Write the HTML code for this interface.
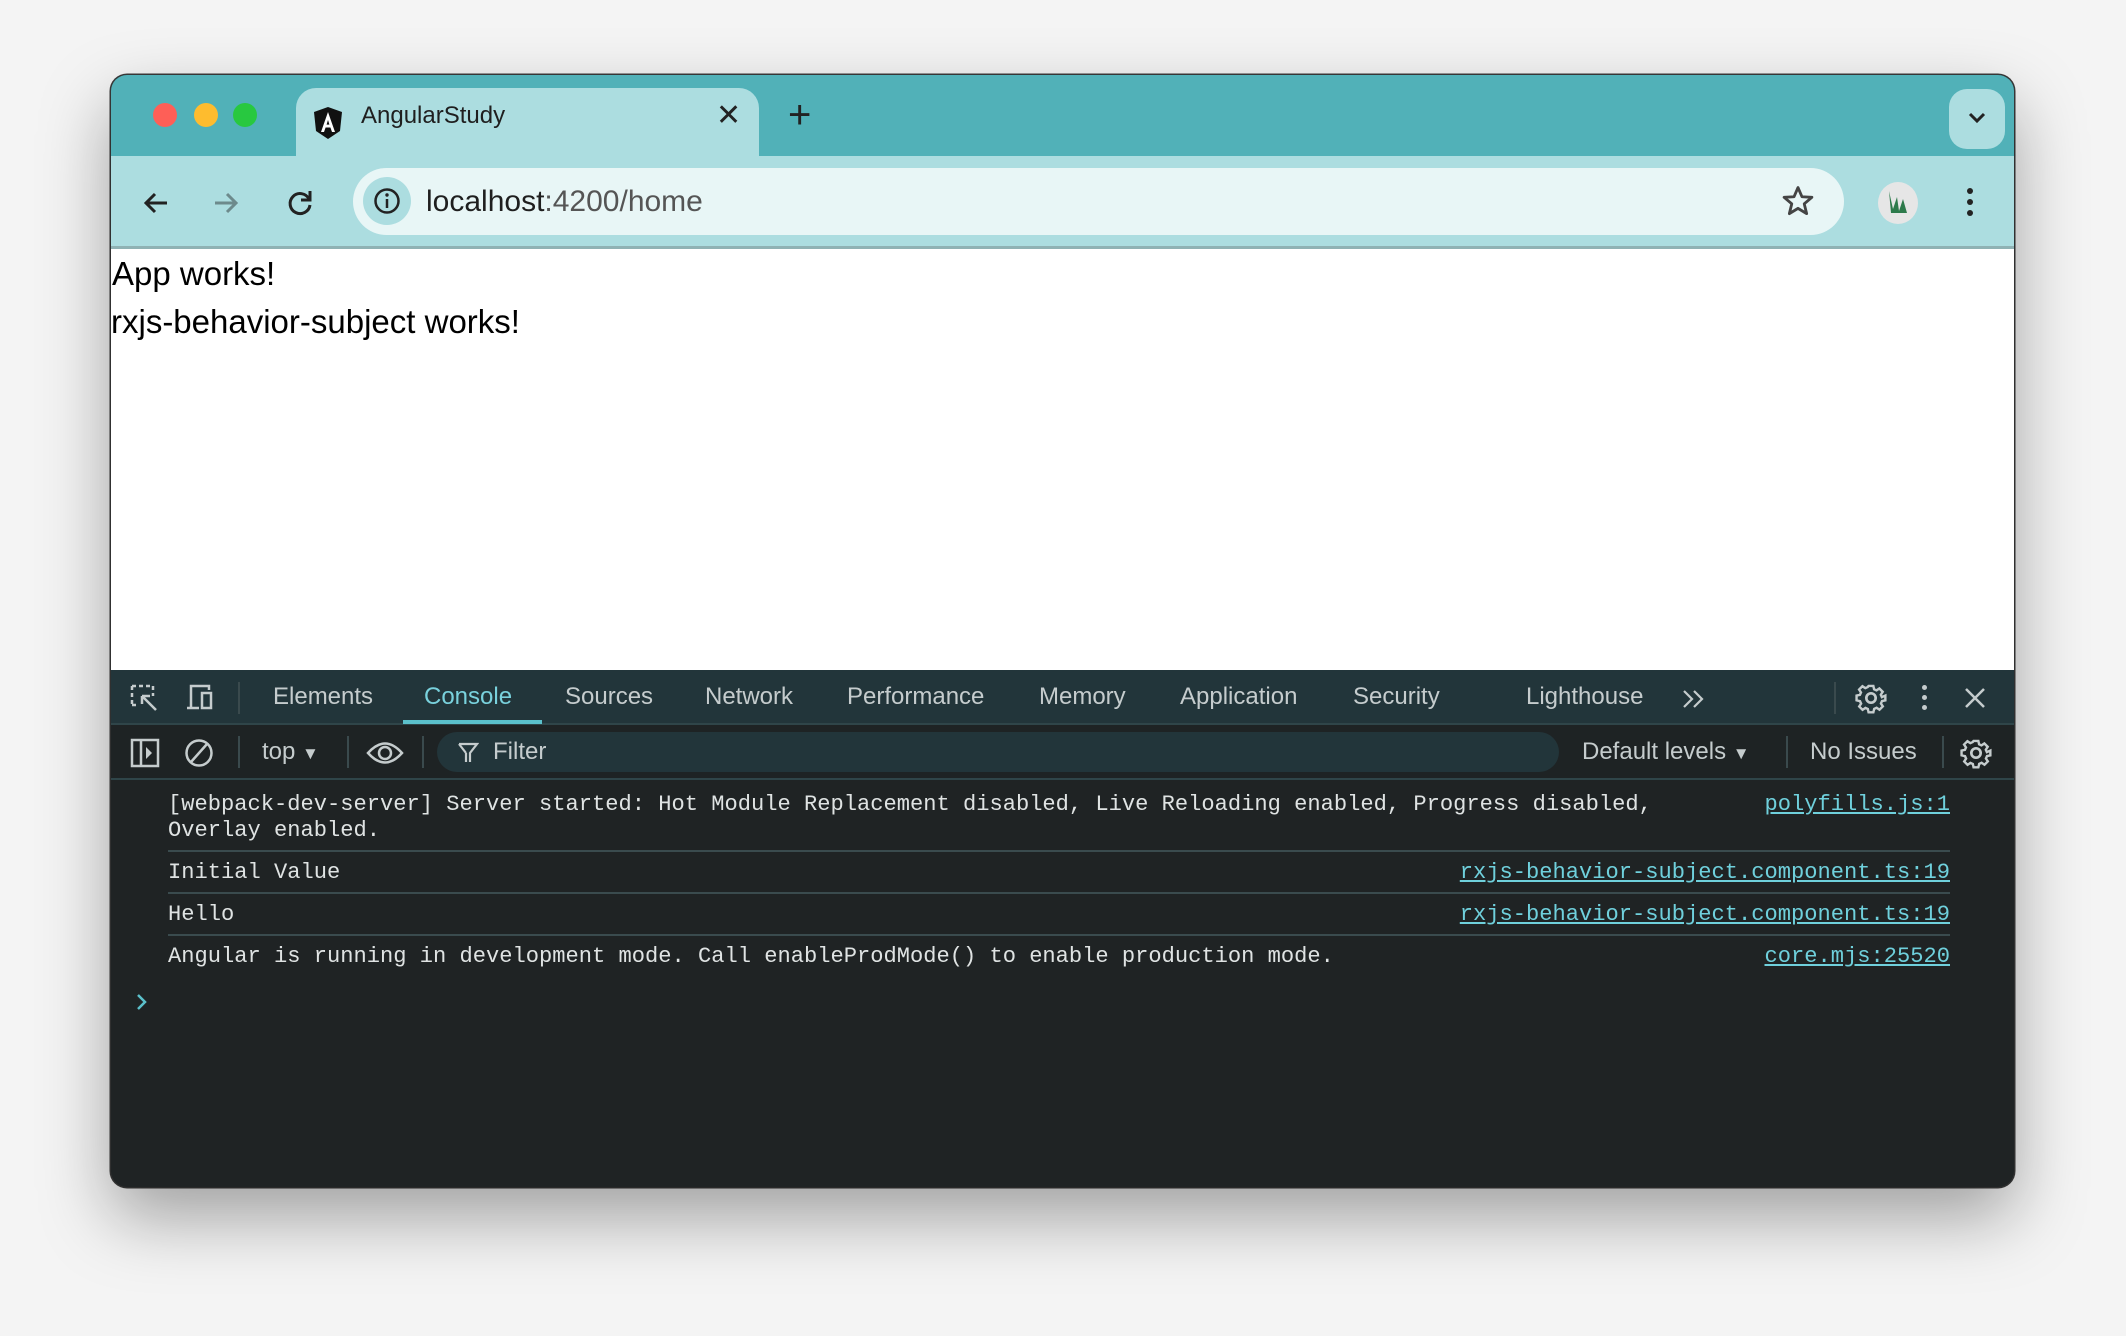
<!DOCTYPE html>
<html><head><meta charset="utf-8"><style>
*{margin:0;padding:0;box-sizing:border-box}
body{width:2126px;height:1336px;background:#f4f4f4;position:relative;overflow:hidden;font-family:"Liberation Sans",sans-serif}
.win{position:absolute;left:111px;top:75px;width:1903px;height:1112px;border-radius:16px;overflow:hidden;background:#1f2324;box-shadow:0 30px 70px rgba(0,0,0,.35),0 0 0 1.5px #3a3a3a}
.abs{position:absolute}
.tabbar{left:0;top:0;width:100%;height:81px;background:#51b1b8}
.dot{width:24px;height:24px;border-radius:50%;top:28px}
.tab{left:185px;top:13px;width:463px;height:68px;background:#acdde0;border-radius:20px 20px 0 0}
.toolbar{left:0;top:81px;width:100%;height:93px;background:#acdde0;border-bottom:3px solid #8fb2b4}
.omni{left:242px;top:12px;width:1491px;height:67px;background:#e8f6f6;border-radius:34px}
.content{left:0;top:174px;width:100%;height:421px;background:#fff;color:#000;font-size:33px}
.dtabs{left:0;top:595px;width:100%;height:55px;background:#22353a;border-bottom:2px solid #2f4549;color:#c5cccd;font-size:24px}
.dtabs span{position:absolute;top:13px}
.ctool{left:0;top:650px;width:100%;height:55px;background:#1e2324;border-bottom:2px solid #2f4549;color:#c5cccd;font-size:24px}
.sep{width:2px;background:#3a4a4d}
.msgs{left:0;top:707px;width:100%;font-family:"Liberation Mono",monospace;font-size:22.08px;color:#dfe3e3}
.row{position:absolute;left:57px;width:1782px;border-bottom:2px solid #3a4b4e}
.row .t{position:absolute;left:0;line-height:26px}
.row .l{position:absolute;right:0;color:#6fd0dc;text-decoration:underline;line-height:26px}
</style></head><body>
<div class="win">
 <div class="abs tabbar">
  <div class="abs dot" style="left:42px;background:#fe5f57"></div>
  <div class="abs dot" style="left:83px;background:#febc2e"></div>
  <div class="abs dot" style="left:122px;background:#28c840"></div>
  <div class="abs tab">
   <svg class="abs" style="left:16px;top:18px" width="32" height="34" viewBox="0 0 32 34"><path d="M16 1 L30 6 L28 25 L16 33 L4 25 L2 6Z" fill="#111"/><path d="M16 6 L9 26 H12 L13.6 21.5 H18.4 L20 26 H23 Z M14.6 18.6 L16 14 L17.4 18.6Z" fill="#fff"/></svg>
   <div class="abs" style="left:65px;top:14px;font-size:24px;color:#1f1f1f">AngularStudy</div>
   <div class="abs" style="left:420px;top:10px;font-size:30px;color:#222">✕</div>
  </div>
  <div class="abs" style="left:677px;top:18px;font-size:40px;color:#222;font-weight:300">+</div>
  <div class="abs" style="left:1838px;top:14px;width:56px;height:60px;border-radius:18px;background:#acdde0"></div>
  <svg class="abs" style="left:1856px;top:36px" width="20" height="14"><path d="M3 3 L10 10 L17 3" stroke="#222" stroke-width="3" fill="none"/></svg>
 </div>
 <div class="abs toolbar">
  <svg class="abs" style="left:30px;top:32px" width="30" height="30"><path d="M26 15 H5 M14 6 L5 15 L14 24" stroke="#222" stroke-width="3" fill="none"/></svg>
  <svg class="abs" style="left:100px;top:32px" width="30" height="30"><path d="M4 15 H25 M16 6 L25 15 L16 24" stroke="#6d8a8c" stroke-width="3" fill="none"/></svg>
  <svg class="abs" style="left:174px;top:32px" width="30" height="30"><path d="M24 11 A10 10 0 1 0 25 17" stroke="#222" stroke-width="3" fill="none"/><path d="M25 3 V12 H16" stroke="#222" stroke-width="3" fill="none"/></svg>
  <div class="abs omni">
   <div class="abs" style="left:10px;top:9px;width:48px;height:48px;border-radius:50%;background:#acdde0"></div>
   <svg class="abs" style="left:20px;top:19px" width="28" height="28"><circle cx="14" cy="14" r="11.5" stroke="#222" stroke-width="2.5" fill="none"/><path d="M14 12 V21" stroke="#222" stroke-width="2.5"/><circle cx="14" cy="8" r="1.7" fill="#222"/></svg>
   <div class="abs" style="left:73px;top:17px;font-size:30px;color:#1f1f1f">localhost<span style="color:#555">:4200/home</span></div>
   <svg class="abs" style="left:1428px;top:16px" width="34" height="34" viewBox="0 0 24 24"><path d="M12 2.5 L14.8 9 L21.8 9.4 L16.4 14 L18.1 20.9 L12 17.2 L5.9 20.9 L7.6 14 L2.2 9.4 L9.2 9Z" stroke="#444" stroke-width="2" fill="none" stroke-linejoin="round"/></svg>
  </div>
  <div class="abs" style="left:1767px;top:26px;width:40px;height:42px;border-radius:50%;background:#e6e6e6"></div>
  <svg class="abs" style="left:1774px;top:33px" width="26" height="28"><path d="M4 2 L8 20 L12 8 L14 22 L18 10 L22 24 L6 24Z" fill="#2d7a4b"/></svg>
  <div class="abs" style="left:1856px;top:32px;width:6px;height:6px;border-radius:50%;background:#222;box-shadow:0 11px 0 #222,0 22px 0 #222"></div>
 </div>
 <div class="abs content">
  <div class="abs" style="left:1px;top:6px">App works!</div>
  <div class="abs" style="left:0;top:54px">rxjs-behavior-subject works!</div>
 </div>
 <div class="abs dtabs">
  <svg class="abs" style="left:19px;top:14px" width="30" height="30"><path d="M2 2h4M9 2h4M16 2h4M2 2v4M2 9v4M2 16v4M2 21h4M23 2v4M23 9v3" stroke="#c5cccd" stroke-width="2.5" fill="none"/><path d="M12 12 L26 26 M12 12 H20 M12 12 V20" stroke="#c5cccd" stroke-width="2.5" fill="none"/></svg>
  <svg class="abs" style="left:74px;top:14px" width="34" height="30"><path d="M6 24 V2 H24 V6 M2 24 H14" stroke="#c5cccd" stroke-width="2.5" fill="none"/><rect x="17" y="9" width="9" height="15" stroke="#c5cccd" stroke-width="2.5" fill="none"/></svg>
  <div class="abs sep" style="left:127px;top:12px;height:32px"></div>
  <span style="left:162px">Elements</span>
  <span style="left:313px;color:#79d1dc">Console</span>
  <div class="abs" style="left:292px;top:50px;width:139px;height:4px;background:#5bc0cb"></div>
  <span style="left:454px">Sources</span>
  <span style="left:594px">Network</span>
  <span style="left:736px">Performance</span>
  <span style="left:928px">Memory</span>
  <span style="left:1069px">Application</span>
  <span style="left:1242px">Security</span>
  <span style="left:1415px">Lighthouse</span>
  <svg class="abs" style="left:1570px;top:18px" width="26" height="22"><path d="M3 3 L11 11 L3 19 M13 3 L21 11 L13 19" stroke="#c5cccd" stroke-width="2.2" fill="none"/></svg>
  <div class="abs sep" style="left:1723px;top:12px;height:32px"></div>
  <svg class="abs" style="left:1744px;top:12px" width="32" height="32" viewBox="0 0 24 24"><path d="M10 2h4l.6 2.8 2 .9 2.4-1.6 2.8 2.8-1.6 2.4.9 2L24 10v4l-2.8.6-.9 2 1.6 2.4-2.8 2.8-2.4-1.6-2 .9L14 24h-4l-.6-2.8-2-.9-2.4 1.6-2.8-2.8 1.6-2.4-.9-2L0 14v-4l2.8-.6.9-2-1.6-2.4 2.8-2.8 2.4 1.6 2-.9Z" transform="scale(.9) translate(1.3 1.3)" stroke="#c5cccd" stroke-width="2" fill="none"/><circle cx="12" cy="12" r="3.5" stroke="#c5cccd" stroke-width="2" fill="none"/></svg>
  <div class="abs" style="left:1811px;top:15px;width:5px;height:5px;border-radius:50%;background:#c5cccd;box-shadow:0 10px 0 #c5cccd,0 20px 0 #c5cccd"></div>
  <svg class="abs" style="left:1853px;top:17px" width="22" height="22"><path d="M2 2 L20 20 M20 2 L2 20" stroke="#c5cccd" stroke-width="2.5"/></svg>
 </div>
 <div class="abs ctool">
  <svg class="abs" style="left:19px;top:13px" width="30" height="30"><rect x="2" y="2" width="26" height="26" stroke="#c5cccd" stroke-width="2.5" fill="none"/><path d="M11 2 V28" stroke="#c5cccd" stroke-width="2.5"/><path d="M16 9 L22 15 L16 21Z" fill="#c5cccd"/></svg>
  <svg class="abs" style="left:73px;top:13px" width="30" height="30"><circle cx="15" cy="15" r="12.5" stroke="#c5cccd" stroke-width="2.5" fill="none"/><path d="M7 24 L23 6" stroke="#c5cccd" stroke-width="2.5"/></svg>
  <div class="abs sep" style="left:127px;top:11px;height:32px"></div>
  <div class="abs" style="left:151px;top:13px">top <span style="font-size:17px">▼</span></div>
  <div class="abs sep" style="left:236px;top:11px;height:32px"></div>
  <svg class="abs" style="left:255px;top:13px" width="38" height="30"><path d="M2 15 Q19 -4 36 15 Q19 34 2 15Z" stroke="#c5cccd" stroke-width="2.5" fill="none"/><circle cx="19" cy="15" r="6" stroke="#c5cccd" stroke-width="2.5" fill="none"/></svg>
  <div class="abs sep" style="left:311px;top:11px;height:32px"></div>
  <div class="abs" style="left:326px;top:7px;width:1122px;height:40px;border-radius:20px;background:#22353a"></div>
  <svg class="abs" style="left:346px;top:16px" width="22" height="24"><path d="M2 3 H20 L13 12 V21 M9 12 V21 M2 3 L9 12" stroke="#c5cccd" stroke-width="2.2" fill="none"/></svg>
  <div class="abs" style="left:382px;top:13px">Filter</div>
  <div class="abs" style="left:1471px;top:13px">Default levels <span style="font-size:17px">▼</span></div>
  <div class="abs sep" style="left:1675px;top:11px;height:32px"></div>
  <div class="abs" style="left:1699px;top:13px">No Issues</div>
  <div class="abs sep" style="left:1831px;top:11px;height:32px"></div>
  <svg class="abs" style="left:1849px;top:12px" width="32" height="32" viewBox="0 0 24 24"><path d="M10 2h4l.6 2.8 2 .9 2.4-1.6 2.8 2.8-1.6 2.4.9 2L24 10v4l-2.8.6-.9 2 1.6 2.4-2.8 2.8-2.4-1.6-2 .9L14 24h-4l-.6-2.8-2-.9-2.4 1.6-2.8-2.8 1.6-2.4-.9-2L0 14v-4l2.8-.6.9-2-1.6-2.4 2.8-2.8 2.4 1.6 2-.9Z" transform="scale(.9) translate(1.3 1.3)" stroke="#c5cccd" stroke-width="2" fill="none"/><circle cx="12" cy="12" r="3.5" stroke="#c5cccd" stroke-width="2" fill="none"/></svg>
 </div>
 <div class="abs msgs">
  <div class="row" style="top:0;height:70px"><div class="t" style="top:10px">[webpack-dev-server] Server started: Hot Module Replacement disabled, Live Reloading enabled, Progress disabled,<br>Overlay enabled.</div><div class="l" style="top:10px">polyfills.js:1</div></div>
  <div class="row" style="top:70px;height:42px"><div class="t" style="top:8px">Initial Value</div><div class="l" style="top:8px">rxjs-behavior-subject.component.ts:19</div></div>
  <div class="row" style="top:112px;height:42px"><div class="t" style="top:8px">Hello</div><div class="l" style="top:8px">rxjs-behavior-subject.component.ts:19</div></div>
  <div class="row" style="top:154px;height:42px;border:none"><div class="t" style="top:8px">Angular is running in development mode. Call enableProdMode() to enable production mode.</div><div class="l" style="top:8px">core.mjs:25520</div></div>
  <svg class="abs" style="left:24px;top:210px" width="14" height="20"><path d="M3 3 L10 10 L3 17" stroke="#5bc0cb" stroke-width="2.5" fill="none"/></svg>
 </div>
</div>
</body></html>
